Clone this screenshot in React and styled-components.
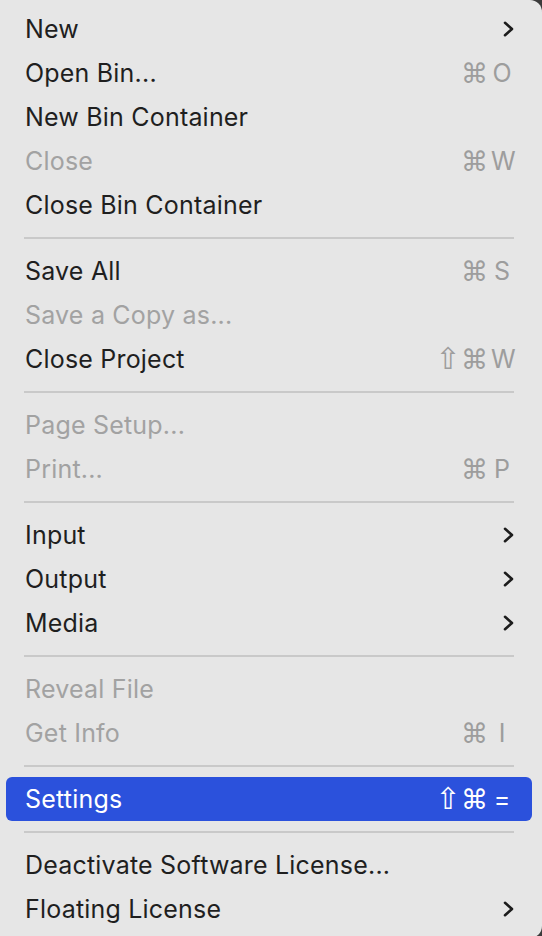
import React from "react";
import styled, { createGlobalStyle } from "styled-components";

const GlobalStyle = createGlobalStyle`
  html, body {
    margin: 0;
    padding: 0;
    background: #3b3b3b;
  }
  body {
    font-family: Inter, "Noto Sans", "Liberation Sans", sans-serif;
    -webkit-font-smoothing: antialiased;
  }
`;

const sections = [
  [
    { label: "New", submenu: true },
    { label: "Open Bin...", keys: ["⌘"], key: "O" },
    { label: "New Bin Container" },
    { label: "Close", disabled: true, keys: ["⌘"], key: "W" },
    { label: "Close Bin Container" },
  ],
  [
    { label: "Save All", keys: ["⌘"], key: "S" },
    { label: "Save a Copy as...", disabled: true },
    { label: "Close Project", keys: ["⇧", "⌘"], key: "W" },
  ],
  [
    { label: "Page Setup...", disabled: true },
    { label: "Print...", disabled: true, keys: ["⌘"], key: "P" },
  ],
  [
    { label: "Input", submenu: true },
    { label: "Output", submenu: true },
    { label: "Media", submenu: true },
  ],
  [
    { label: "Reveal File", disabled: true },
    { label: "Get Info", disabled: true, keys: ["⌘"], key: "I" },
  ],
  [{ label: "Settings", active: true, keys: ["⇧", "⌘"], key: "=" }],
  [
    { label: "Deactivate Software License..." },
    { label: "Floating License", submenu: true },
  ],
];

const Chevron = ({ color }) => (
  <svg width="14" height="16" viewBox="0 0 14 16" fill="none">
    <path
      d="M4 1.8 L11 8 L4 14.2"
      stroke={color}
      strokeWidth="2.6"
      strokeLinecap="round"
      strokeLinejoin="round"
    />
  </svg>
);

export default function App() {
  return (
    <>
      <GlobalStyle />
      <Menu>
        {sections.map((items, i) => (
          <React.Fragment key={i}>
            {i > 0 && (
              <Separator>
                <Line />
              </Separator>
            )}
            {items.map((it) => (
              <Item key={it.label} $active={it.active} $disabled={it.disabled}>
                <Label>{it.label}</Label>
                {it.submenu && <Chevron color={it.active ? "#fff" : "#1c1c1c"} />}
                {it.key && (
                  <Shortcut $active={it.active}>
                    {it.keys.map((m) => (
                      <Mod key={m} $shift={m === "⇧"}>
                        {m}
                      </Mod>
                    ))}
                    <Key>{it.key}</Key>
                  </Shortcut>
                )}
              </Item>
            ))}
          </React.Fragment>
        ))}
      </Menu>
    </>
  );
}

const Menu = styled.div`
  background: #e6e6e6;
  min-height: 936px;
  box-sizing: border-box;
  padding: 7px 0;
  border-radius: 0 12px 12px 0;
  display: flex;
  flex-direction: column;
`;

const Item = styled.div`
  height: 44px;
  margin: 0 10px 0 6px;
  padding: 0 17px 0 19px;
  display: flex;
  align-items: center;
  justify-content: space-between;
  border-radius: 6px;
  font-size: 25px;
  color: ${(p) => (p.$active ? "#fff" : p.$disabled ? "#a2a2a2" : "#1f1f1f")};
  background: ${(p) => (p.$active ? "#2b51dc" : "transparent")};
`;

const Label = styled.span`
  white-space: nowrap;
  letter-spacing: 0.2px;
`;

const Shortcut = styled.span`
  display: flex;
  align-items: center;
  margin-right: 2px;
  color: ${(p) => (p.$active ? "#fff" : "#9d9d9d")};
`;

const Mod = styled.span`
  font-family: "DejaVu Sans", sans-serif;
  font-size: ${(p) => (p.$shift ? "30px" : "27px")};
  line-height: 1;
  width: 26px;
  text-align: center;
`;

const Key = styled.span`
  width: 22px;
  margin-left: 4px;
  text-align: center;
  font-size: 25px;
`;

const Separator = styled.div`
  height: 22px;
  display: flex;
  align-items: center;
`;

const Line = styled.div`
  height: 2px;
  flex: 1;
  margin: 0 28px 0 24px;
  background: #c9c9c9;
`;
